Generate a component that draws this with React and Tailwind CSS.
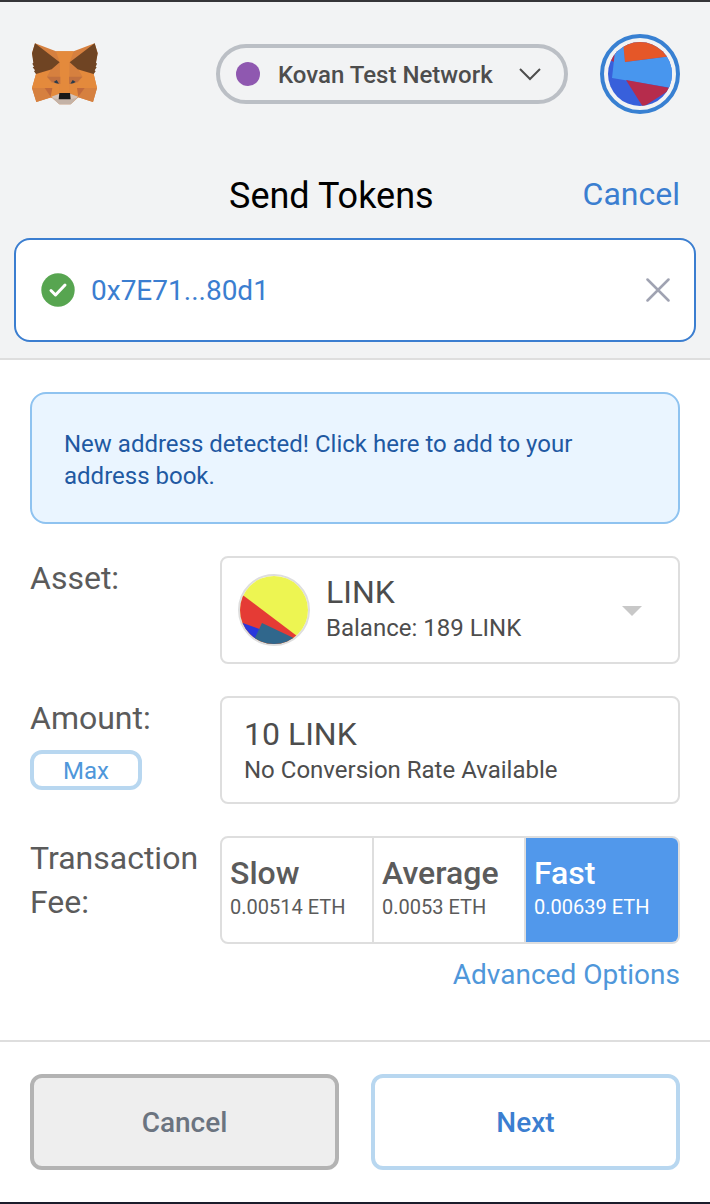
import { useState } from 'react';

const fees = [
  { id: 'slow', name: 'Slow', amount: '0.00514 ETH' },
  { id: 'average', name: 'Average', amount: '0.0053 ETH' },
  { id: 'fast', name: 'Fast', amount: '0.00639 ETH' },
];

function FoxLogo() {
  return (
    <svg viewBox="93 126 204 192" className="h-16 w-[68px]" role="img" aria-label="MetaMask">
      {/* head */}
      <path d="M105 130 L168 154 H221 L284 130 L293 160 L281 222 L291 264 L279 306 L235 292 L212 313 H178 L154 292 L109 306 L96 264 L108 222 L96 160 Z" fill="#d6803f" />
      <path d="M168 154 H221 L209 187 V279 H179 V187 Z" fill="#e48a3c" />
      {/* cheeks */}
      <path d="M108 222 L152 210 L141 230 L155 248 L179 252 V279 L154 294 L134 264 H96 Z" fill="#e48a3c" />
      <path d="M281 222 L236 210 L247 230 L233 248 L209 252 V279 L235 292 L254 264 H291 Z" fill="#e48a3c" />
      <path d="M96 264 H134 L154 292 L109 306 Z M291 264 H254 L235 292 L279 306 Z" fill="#d6803f" />
      <path d="M134 264 H157 L152 290 Z M254 264 H231 L235 290 Z" fill="#c1693b" />
      {/* brow and eyes */}
      <path d="M155 208 L179 187 V230 H141 Z M233 208 L209 187 V230 H247 Z" fill="#d6803f" />
      <path d="M141 230 H181 V252 L155 245 Z M247 230 H207 V252 L233 245 Z" fill="#c1703f" />
      <path d="M161 246 L170 240 L177 251 L168 250 Z M227 246 L218 240 L211 251 L220 250 Z" fill="#2b3c4c" />
      {/* ears */}
      <path d="M105 130 L179 187 L155 208 L108 222 L102 214 L105 211 L98 202 L102 200 L97 191 L100 188 L96 160 Z" fill="#6f4423" />
      <path d="M284 130 L209 187 L233 208 L281 222 L287 214 L284 211 L290 202 L287 200 L291 191 L288 188 L293 160 Z" fill="#6f4423" />
      {/* muzzle */}
      <path d="M154 290 L178 281 H211 L234 290 L212 313 H178 Z" fill="#d5c3b8" />
      <path d="M176 298 H212 L232 293 L212 313 H178 L157 294 Z" fill="#c4b2a6" />
      <path d="M178 279 H210 L212 298 H176 Z" fill="#1a1918" />
    </svg>
  );
}

function AccountIcon() {
  return (
    <svg viewBox="0 0 64 64" className="h-16 w-16 rounded-full" aria-hidden="true">
      <rect width="64" height="64" fill="#3860db" />
      <path d="M0 8 H9 L6 20 L2 18 Z" fill="#b62c4c" />
      <path d="M8 0 H16 L17 20 L64 14 V46 L4 36 Z" fill="#4896ee" />
      <path d="M15 0 H64 V14 L17 20 Z" fill="#e55728" />
      <path d="M18 38 L62 46 L60 49 L35 65 Z" fill="#b62c4c" />
    </svg>
  );
}

function TokenIcon() {
  return (
    <svg viewBox="0 0 68 68" className="h-[72px] w-[72px] rounded-full border-2 border-[#dedede]" aria-hidden="true">
      <rect width="68" height="68" fill="#edf552" />
      <path d="M0 17 L57 60 L50 68 H0 Z" fill="#e53b35" />
      <path d="M0 46 L22 54 L14 68 H0 Z" fill="#2938dc" />
      <path d="M22 47 L60 65 L56 68 H12 Z" fill="#30678c" />
    </svg>
  );
}

function Header() {
  return (
    <header className="flex items-center justify-between pt-8 pr-[30px] pl-[31px]">
      <FoxLogo />
      <div className="flex items-center gap-8">
        <div className="flex h-[60px] w-[352px] items-center rounded-full border-4 border-[#bbbfc5] px-4">
          <span className="h-6 w-6 shrink-0 rounded-full bg-[#8f58b0]" />
          <select
            aria-label="Network"
            className="ml-[18px] min-w-0 flex-1 appearance-none bg-transparent pt-[2px] text-2xl font-medium text-[#4d4d4d]"
          >
            <option>Kovan Test Network</option>
          </select>
          <svg viewBox="0 0 24 14" className="mr-1.5 h-[14px] w-6 shrink-0" fill="none" aria-hidden="true">
            <path d="M2 2 L12 12 L22 2" stroke="#4d4d4d" strokeWidth="2" />
          </svg>
        </div>
        <button
          aria-label="Account"
          className="flex h-20 w-20 items-center justify-center rounded-full border-4 border-[#3880d2]"
        >
          <AccountIcon />
        </button>
      </div>
    </header>
  );
}

function Row({ label, htmlFor, extra, children }) {
  return (
    <div className="flex items-start">
      <div className="w-[190px] shrink-0">
        <label htmlFor={htmlFor} className="block text-[32px] leading-[44px]">
          {label}
        </label>
        {extra}
      </div>
      <div className="min-w-0 flex-1">{children}</div>
    </div>
  );
}

export default function App() {
  const [amount, setAmount] = useState('10 LINK');
  const [fee, setFee] = useState('fast');

  return (
    <div className="border-t-2 border-[#353538] bg-white font-[Roboto,sans-serif] text-[#5b5b5b]">
      <div className="border-b-2 border-[#dedede] bg-[#f2f3f4] pb-4">
        <Header />

        <div className="mt-14 flex items-center pr-[30px] pl-20">
          <h1 className="flex-1 pt-1 text-center text-4xl leading-[44px] text-black">Send Tokens</h1>
          <button className="text-[32px] leading-[48px] text-[#3b7ed0]">Cancel</button>
        </div>

        <div className="mx-[14px] mt-5 flex h-[104px] items-center rounded-2xl border-2 border-[#3b7ed0] bg-white pr-6 pl-[25px]">
          <svg viewBox="0 0 34 34" className="h-[34px] w-[34px]" fill="none" aria-hidden="true">
            <circle cx="17" cy="17" r="16.700" fill="#57a550" />
            <path d="M10 17.500 L14.500 22 L24 12" stroke="#fff" strokeWidth="3" strokeLinecap="round" strokeLinejoin="round" />
          </svg>
          <span className="ml-4 flex-1 pt-[2px] text-[28px] text-[#3b7ed0]">0x7E71...80d1</span>
          <button aria-label="Remove recipient">
            <svg viewBox="0 0 24 24" className="h-6 w-6" fill="none" aria-hidden="true">
              <path d="M1.500 1.500 L22.500 22.500 M22.500 1.500 L1.500 22.500" stroke="#a0a3b2" strokeWidth="2.500" strokeLinecap="round" />
            </svg>
          </button>
        </div>
      </div>

      <main className="px-[30px] pt-8">
        <button className="block w-full rounded-2xl border-2 border-[#8fc3f0] bg-[#eaf5ff] px-8 pt-[34px] pb-[30px] text-left text-2xl leading-8 text-[#1f59a2]">
          New address detected! Click here to add to your address book.
        </button>

        <div className="mt-8 flex flex-col gap-8">
          <Row label="Asset:" htmlFor="asset">
            <div className="flex h-[108px] items-center rounded-lg border-2 border-[#dedede] pr-9 pl-4">
              <TokenIcon />
              <div className="ml-4 min-w-0 flex-1 text-[#4d4d4d]">
                <select id="asset" className="block h-9 w-full appearance-none text-[32px] leading-9">
                  <option>LINK</option>
                </select>
                <div className="text-2xl leading-9">Balance: 189 LINK</div>
              </div>
              <svg viewBox="0 0 20 10" className="mt-[2px] h-[10px] w-5" aria-hidden="true">
                <path d="M0 0 H20 L10 10 Z" fill="#c8c8c8" />
              </svg>
            </div>
          </Row>

          <Row
            label="Amount:"
            htmlFor="amount"
            extra={
              <button className="mt-[10px] flex h-10 w-28 items-center justify-center rounded-xl border-4 border-[#b8d7f0] pt-[2px] text-2xl text-[#4f97da]">
                Max
              </button>
            }
          >
            <div className="h-[108px] rounded-lg border-2 border-[#dedede] px-[22px] pt-[18px] text-[#4d4d4d]">
              <input
                id="amount"
                value={amount}
                onChange={(e) => setAmount(e.target.value)}
                className="block h-9 w-full text-[32px] leading-9 outline-none"
              />
              <div className="text-2xl leading-9">No Conversion Rate Available</div>
            </div>
          </Row>

          <Row label="Transaction Fee:" htmlFor={fee}>
            <div className="grid h-[108px] grid-cols-3 divide-x-2 divide-[#dedede] overflow-hidden rounded-lg border-2 border-[#dedede]">
              {fees.map((f) => (
                <label
                  key={f.id}
                  className="relative px-2 pt-4 has-checked:bg-[#5198eb] has-checked:text-white"
                >
                  <input
                    type="radio"
                    name="fee"
                    id={f.id}
                    checked={fee === f.id}
                    onChange={() => setFee(f.id)}
                    className="sr-only"
                  />
                  <span className="block text-[32px] leading-[38px] font-medium">{f.name}</span>
                  <span className="block text-xl leading-[30px]">{f.amount}</span>
                </label>
              ))}
            </div>
            <div className="mt-2 text-right">
              <a href="#" className="text-[28px] leading-[46px] text-[#4f97da]">Advanced Options</a>
            </div>
          </Row>
        </div>
      </main>

      <footer className="mt-[42px] grid grid-cols-2 gap-8 border-t-2 border-[#dedede] px-[30px] py-8 text-[28px] font-medium">
        <button className="h-24 rounded-xl border-4 border-[#b3b3b3] bg-[#eeeeee] pt-[2px] text-[#6b7480]">Cancel</button>
        <button className="h-24 rounded-xl border-4 border-[#b8d7f0] bg-white pt-[2px] text-[#3b7ed0]">Next</button>
      </footer>
      <div className="h-[2px] bg-[#1b1c2b]" />
    </div>
  );
}
